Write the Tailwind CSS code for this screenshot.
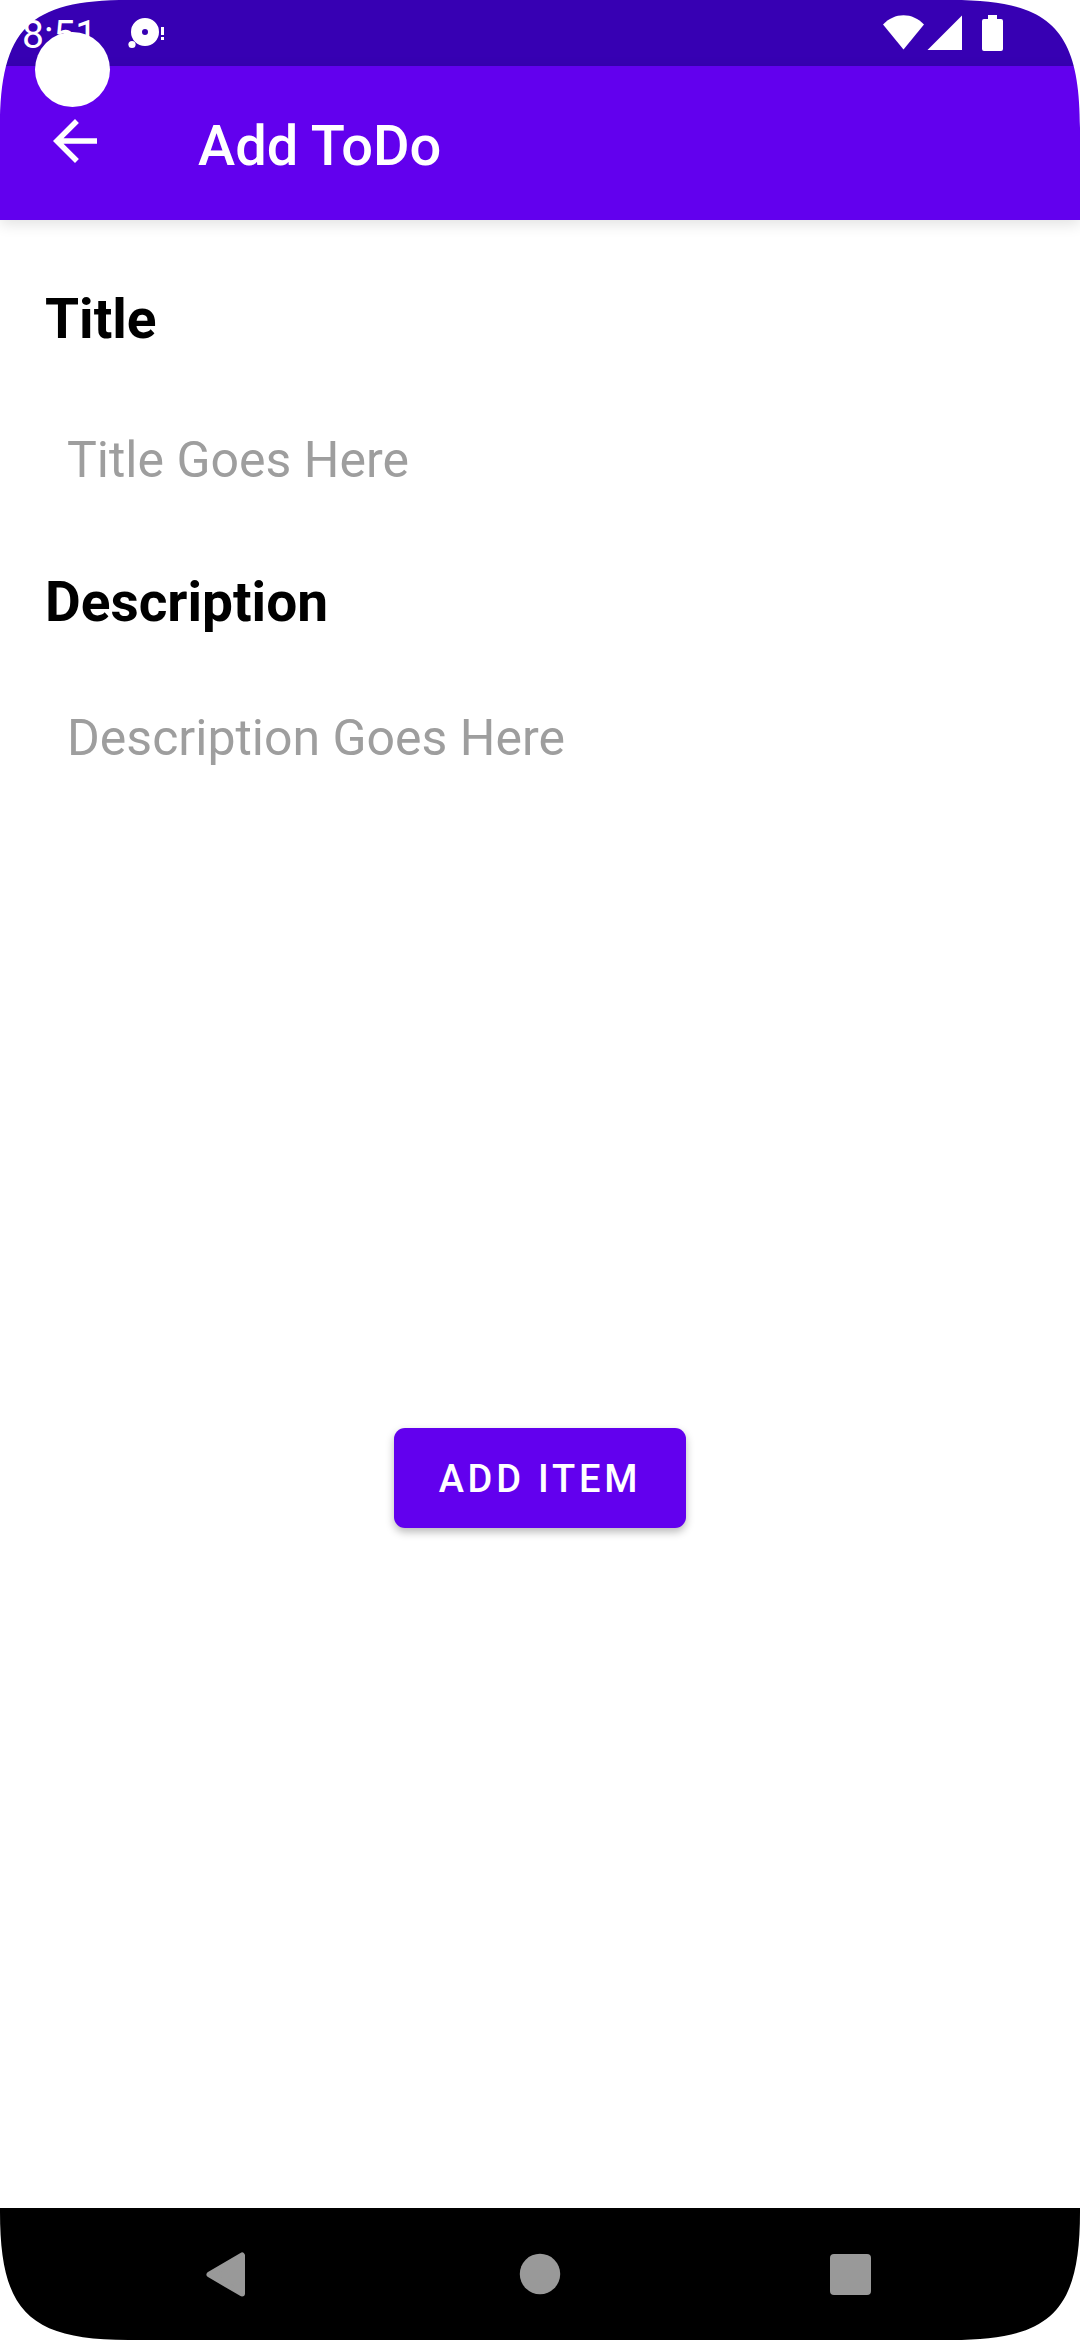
<!DOCTYPE html>
<html lang="en">
<head>
<meta charset="utf-8">
<meta name="viewport" content="width=device-width, initial-scale=1">
<title>Add ToDo</title>
<script src="https://cdn.jsdelivr.net/npm/@tailwindcss/browser@4"></script>
</head>
<body class="bg-white">
<div class="relative flex min-h-screen flex-col overflow-hidden bg-white font-[Roboto,sans-serif] text-black">

  <!-- Status bar -->
  <div class="flex h-[66px] items-start justify-between bg-[#3700b3] pr-[76px] pl-[22px] text-white">
    <div class="flex items-start">
      <time class="w-[106px] pt-3 text-[39px] leading-[46px]">8:51</time>
      <svg class="h-[66px] w-10" viewBox="128 0 40 66" fill="currentColor" aria-hidden="true">
        <path fill-rule="evenodd" d="M145 18a14 14 0 1 0 0 28a14 14 0 1 0 0-28zM145 29a3 3 0 1 1 0 6a3 3 0 1 1 0-6z"/>
        <circle cx="132" cy="44.500" r="3.600"/>
        <path d="M161 27h3v8h-3zM161 37h3v3h-3z"/>
      </svg>
    </div>
    <svg class="h-[66px] w-[122px]" viewBox="882 0 122 66" fill="currentColor" role="img" aria-label="Wi-Fi, signal and battery full">
      <path d="M903.500 49.500L883 24.500C888.500 18.500 896 15.200 903.500 15.200S918.500 18.500 924 24.500z"/>
      <path d="M927.500 50L962 15.500V50z"/>
      <path d="M988 15h9v4h4q2 0 2 2v28q0 2-2 2h-17q-2 0-2-2V21q0-2 2-2h4z"/>
    </svg>
  </div>

  <!-- App bar -->
  <header class="flex h-[154px] items-start bg-[#6200ee] pt-[42px] pl-[42px] text-white shadow-[0_4px_14px_rgba(0,0,0,0.12)]">
    <button type="button" aria-label="Navigate up" class="mr-[90px] size-[66px]">
      <svg class="size-full" viewBox="0 0 24 24" fill="currentColor"><path d="M20 11H7.830l5.590-5.590L12 4l-8 8 8 8 1.410-1.410L7.830 13H20v-2z"/></svg>
    </button>
    <h1 class="text-[56px] leading-[76px] font-medium">Add ToDo</h1>
  </header>

  <!-- Form -->
  <main class="grow">
    <form class="flex flex-col px-[45px] pt-[67px]">
      <label for="title" class="text-[55px] leading-[64px] font-bold">Title</label>
      <input id="title" type="text" placeholder="Title Goes Here" class="my-[41px] h-[137px] px-[22px] pb-[2px] text-[50px] leading-[58px] outline-none placeholder:text-[#9e9e9e]">
      <label for="description" class="text-[55px] leading-[64px] font-bold">Description</label>
      <textarea id="description" placeholder="Description Goes Here" class="mt-[41px] h-[550px] resize-none px-[22px] py-[34px] text-[50px] leading-[58px] outline-none placeholder:text-[#9e9e9e]"></textarea>
      <button type="button" class="mt-[203px] h-[100px] self-center rounded-[11px] bg-[#6200ee] px-[45px] pt-[2px] text-[38px] leading-[46px] font-medium tracking-widest text-white shadow-[0_4px_8px_rgba(0,0,0,0.28)]">ADD ITEM</button>
    </form>
  </main>

  <!-- System navigation -->
  <nav class="flex h-[132px] items-center justify-between bg-black px-[195px] text-[#999999]">
    <button type="button" aria-label="Back" class="size-[60px]">
      <svg class="size-full" viewBox="0 0 60 60" fill="currentColor" stroke="currentColor" stroke-width="6" stroke-linejoin="round"><path d="M14.500 30.500L47 11.500V49.500z"/></svg>
    </button>
    <button type="button" aria-label="Home" class="size-[60px]">
      <svg class="size-full" viewBox="0 0 60 60" fill="currentColor"><circle cx="30" cy="30" r="20.200"/></svg>
    </button>
    <button type="button" aria-label="Recent apps" class="size-[60px]">
      <svg class="size-full" viewBox="0 0 60 60" fill="currentColor"><rect x="5" y="10" width="41" height="41" rx="4"/></svg>
    </button>
  </nav>

  <!-- Display cutout and rounded screen corners -->
  <div class="absolute top-8 left-[35px] size-[75px] rounded-full bg-white"></div>
  <svg class="pointer-events-none absolute top-0 left-0 size-32" viewBox="0 0 128 128" fill="white"><path d="M0 0V128C0 29 29 0 128 0z"/></svg>
  <svg class="pointer-events-none absolute top-0 right-0 size-32" viewBox="0 0 128 128" fill="white"><path d="M128 0V128C128 29 99 0 0 0z"/></svg>
  <svg class="pointer-events-none absolute bottom-0 left-0 size-32" viewBox="0 0 128 128" fill="white"><path d="M0 128V0C0 99 29 128 128 128z"/></svg>
  <svg class="pointer-events-none absolute right-0 bottom-0 size-32" viewBox="0 0 128 128" fill="white"><path d="M128 128V0C128 99 99 128 0 128z"/></svg>
</div>
</body>
</html>
